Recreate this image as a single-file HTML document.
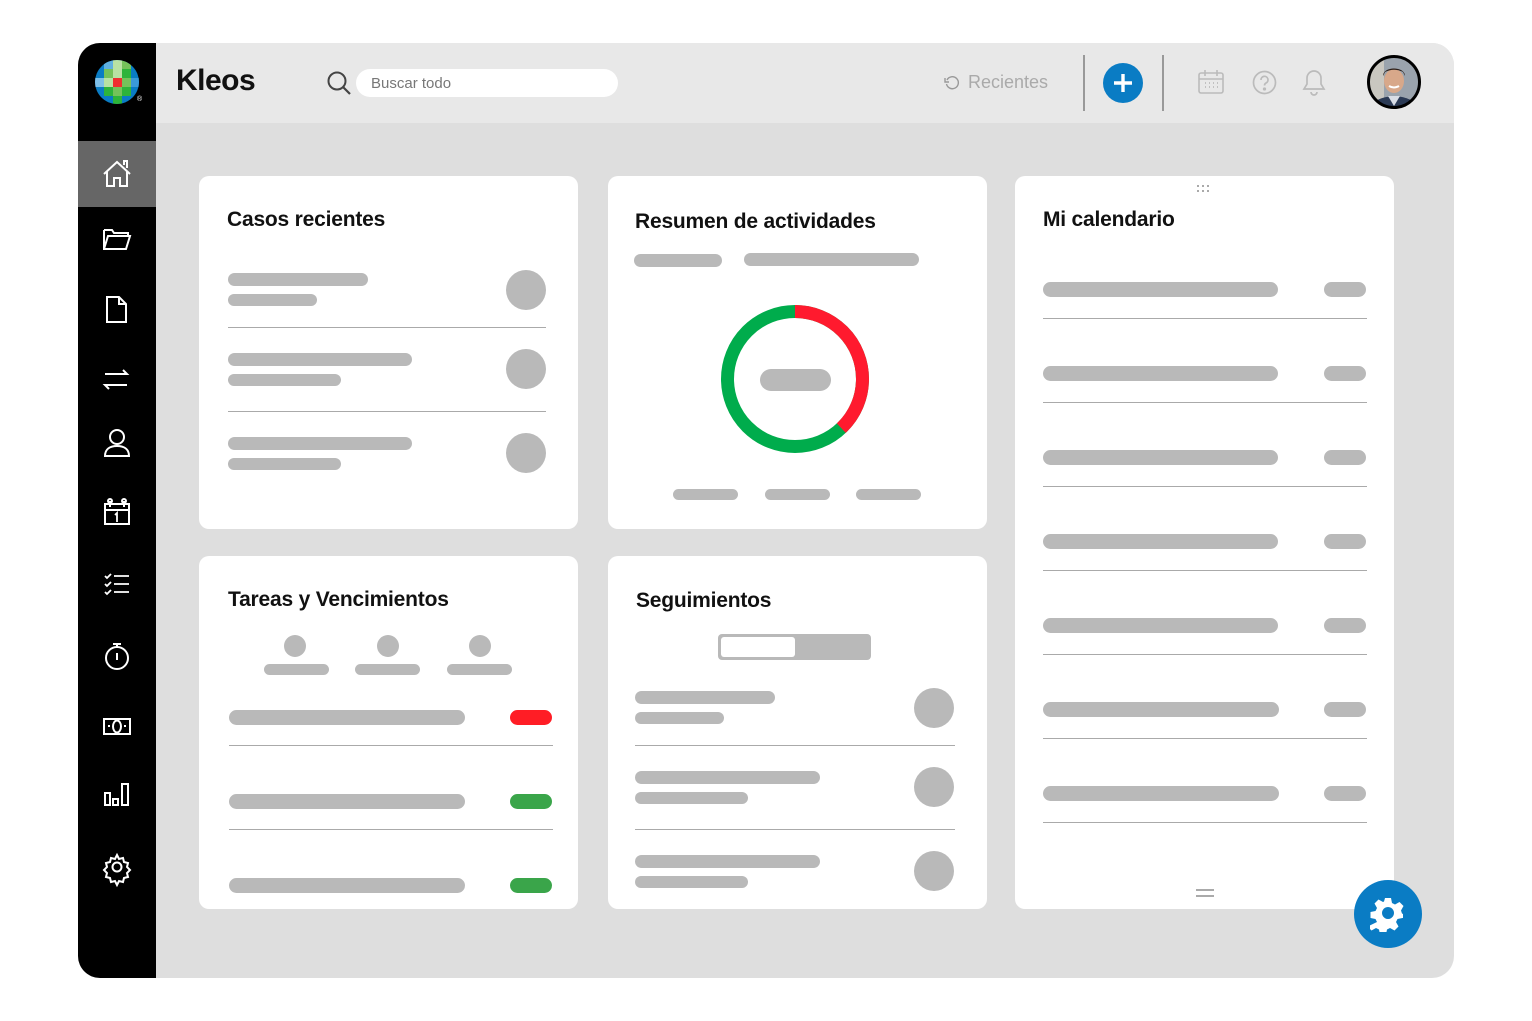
<!DOCTYPE html>
<html><head><meta charset="utf-8"><style>
*{margin:0;padding:0;box-sizing:border-box}
body{width:1532px;height:1021px;background:#fff;position:relative;overflow:hidden;font-family:"Liberation Sans",sans-serif}
.a{position:absolute}
.p{position:absolute;background:#b9b9b9;border-radius:8px}
.c{position:absolute;background:#b9b9b9;border-radius:50%}
.d{position:absolute;height:1px;background:#aaa}
.card{position:absolute;background:#fff;border-radius:10px}
.t{position:absolute;font-weight:bold;font-size:21px;color:#111;white-space:nowrap;letter-spacing:-0.2px}
.ic{position:absolute;left:100px}
</style></head><body>
<div class="a" style="left:78px;top:43px;width:1376px;height:935px;background:#dedede;border-radius:22px;overflow:hidden">
  <div class="a" style="left:78px;top:0;width:1298px;height:80px;background:#e8e8e8"></div>
  <div class="a" style="left:0;top:0;width:78px;height:935px;background:#000"></div>
  <div class="a" style="left:0;top:98px;width:78px;height:66px;background:#666"></div>
</div>
<!-- logo -->
<svg class="a" style="left:90px;top:55px" width="60" height="55" viewBox="0 0 60 55">
<defs><clipPath id="cl"><circle cx="27" cy="27" r="22"/></clipPath></defs>
<g clip-path="url(#cl)">
<rect x="0" y="0" width="60" height="55" fill="#0a7cc4"/>
<rect x="14" y="5" width="9" height="9" fill="#5fb0e0"/><rect x="23" y="5" width="9" height="9" fill="#b8e2a3"/><rect x="32" y="5" width="9" height="9" fill="#75c25a"/>
<rect x="14" y="14" width="9" height="9" fill="#75c25a"/><rect x="23" y="14" width="9" height="9" fill="#b8e2a3"/><rect x="32" y="14" width="9" height="9" fill="#2db43a"/>
<rect x="5" y="23" width="9" height="9" fill="#7fc0e8"/><rect x="14" y="23" width="9" height="9" fill="#b8e2a3"/><rect x="23" y="23" width="9" height="9" fill="#ee2f2f"/><rect x="32" y="23" width="9" height="9" fill="#75c25a"/><rect x="41" y="23" width="9" height="9" fill="#3a9ad8"/>
<rect x="14" y="32" width="9" height="9" fill="#2db43a"/><rect x="23" y="32" width="9" height="9" fill="#75c25a"/><rect x="32" y="32" width="9" height="9" fill="#2db43a"/>
<rect x="23" y="41" width="9" height="9" fill="#2db43a"/>
</g>
<text x="47" y="46" font-size="7" fill="#fff" font-family="Liberation Sans">®</text>
</svg>
<div class="a" style="left:176px;top:64px;font-size:30px;font-weight:bold;color:#111;letter-spacing:-0.5px">Kleos</div>
<svg class="a" style="left:326px;top:70px" width="26" height="26" viewBox="0 0 26 26"><circle cx="11" cy="11" r="8.5" fill="none" stroke="#444" stroke-width="2"/><path d="M17 17l7 7" stroke="#444" stroke-width="2.2"/></svg>
<div class="a" style="left:356px;top:69px;width:262px;height:28px;background:#fff;border-radius:14px;font-size:15px;color:#777;padding:6px 0 0 15px">Buscar todo</div>
<svg class="a" style="left:944px;top:75px" width="16" height="16" viewBox="0 0 16 16"><path d="M3 5A6 6 0 1 1 2.5 9" fill="none" stroke="#999" stroke-width="1.4"/><path d="M1 3v4h4" fill="none" stroke="#999" stroke-width="1.4"/></svg>
<div class="a" style="left:968px;top:72px;font-size:18px;color:#aaa">Recientes</div>
<div class="a" style="left:1083px;top:55px;width:2px;height:56px;background:#999"></div>
<div class="a" style="left:1162px;top:55px;width:2px;height:56px;background:#999"></div>
<div class="a" style="left:1103px;top:63px;width:40px;height:40px;border-radius:50%;background:#0a7cc4"></div>
<svg class="a" style="left:1103px;top:63px" width="40" height="40"><path d="M20 11v18M11 20h18" stroke="#fff" stroke-width="3.4"/></svg>
<svg class="a" style="left:1197px;top:68px" width="28" height="28" viewBox="0 0 28 28" fill="none" stroke="#bbb" stroke-width="1.6"><rect x="2" y="5" width="24" height="20" rx="2"/><path d="M2 11h24M8 2v6M20 2v6"/><path d="M8 15h1M12 15h1M16 15h1M20 15h1M8 19h1M12 19h1M16 19h1M20 19h1" stroke-width="1.8"/></svg>
<svg class="a" style="left:1252px;top:70px" width="25" height="25" viewBox="0 0 25 25" fill="none" stroke="#bbb" stroke-width="1.7"><circle cx="12.5" cy="12.5" r="11"/><path d="M9 10a3.5 3.5 0 1 1 5 3c-1.2.7-1.5 1.3-1.5 2.5"/><circle cx="12.5" cy="19" r=".8" fill="#bbb"/></svg>
<svg class="a" style="left:1301px;top:68px" width="26" height="28" viewBox="0 0 26 28" fill="none" stroke="#bbb" stroke-width="1.7"><path d="M13 3a7 7 0 0 0-7 7v6l-3 5h20l-3-5v-6a7 7 0 0 0-7-7z"/><path d="M10 24a3 3 0 0 0 6 0"/></svg>
<svg class="a" style="left:1366px;top:54px" width="56" height="56" viewBox="0 0 56 56">
<defs><clipPath id="av"><circle cx="28" cy="28" r="25"/></clipPath></defs>
<g clip-path="url(#av)"><rect width="56" height="56" fill="#9aa3ad"/><rect x="0" y="0" width="18" height="56" fill="#c9c7c0"/><path d="M4 56c2-10 12-13 24-14 12 1 22 4 24 14z" fill="#2b3a55"/><path d="M22 42l6 10 6-10z" fill="#d8dde6"/><ellipse cx="28" cy="27" rx="10" ry="12" fill="#d8a88a"/><path d="M17 22c0-10 22-10 22 0l-2-4c-6-3-12-3-18 0z" fill="#2a1e18"/><path d="M23 32q5 3 10 0" stroke="#fff" stroke-width="2" fill="none"/></g>
<circle cx="28" cy="28" r="25.5" fill="none" stroke="#000" stroke-width="3"/></svg>
<!-- sidebar icons -->
<svg class="a" style="left:78px;top:140px" width="78" height="760" viewBox="0 0 78 760" fill="none" stroke="#fff" stroke-width="2">
<path d="M26 34l13-12 13 12M29 31v15h7v-8h6v8h7v-15M46 25v-4h3v7"/>
<path d="M26 90h8l2 3h14v3M26 90v19h22l4-13H30l-4 13"/>
<path d="M29 157h12l7 7v18H29zM41 157v7h7"/>
<path d="M27 234h22l-4-4M49 245H27l4 4"/>
<circle cx="39" cy="297" r="7"/><path d="M27 316c0-7 5-10 12-10s12 3 12 10z"/>
<rect x="27" y="364" width="24" height="20"/><path d="M27 370h24M32 361v6M46 361v6"/><circle cx="32" cy="361" r="2"/><circle cx="46" cy="361" r="2"/><path d="M37 375l2-2v9" stroke-width="1.8"/>
<path d="M27 436l2 2 4-4M27 444l2 2 4-4M27 452l2 2 4-4M36 436h15M36 444h15M36 452h15" stroke-width="1.8"/>
<circle cx="39" cy="518" r="11"/><path d="M35 504h8M39 504v4M39 513v7"/>
<rect x="26" y="579" width="26" height="15"/><ellipse cx="39" cy="586.5" rx="4" ry="6"/><path d="M30 586h2M46 586h2"/>
<path d="M27 653h5v12h-5zM35 659h5v6h-5zM44 644h6v21h-6z"/>
<path d="M39 715l2 4 4-1 1 4 4 1-1 4 3 3-3 3 1 4-4 1-1 4-4-1-2 4-2-4-4 1-1-4-4-1 1-4-3-3 3-3-1-4 4-1 1-4 4 1z"/><circle cx="39" cy="727" r="4.5"/>
</svg>
<!-- card 1 -->
<div class="card" style="left:199px;top:176px;width:379px;height:353px"></div>
<div class="t" style="left:227px;top:208px">Casos recientes</div>
<div class="p" style="left:228px;top:273px;width:140px;height:13px"></div><div class="p" style="left:228px;top:294px;width:89px;height:12px"></div><div class="c" style="left:506px;top:270px;width:40px;height:40px"></div>
<div class="d" style="left:228px;top:327px;width:318px"></div>
<div class="p" style="left:228px;top:353px;width:184px;height:13px"></div><div class="p" style="left:228px;top:374px;width:113px;height:12px"></div><div class="c" style="left:506px;top:349px;width:40px;height:40px"></div>
<div class="d" style="left:228px;top:411px;width:318px"></div>
<div class="p" style="left:228px;top:437px;width:184px;height:13px"></div><div class="p" style="left:228px;top:458px;width:113px;height:12px"></div><div class="c" style="left:506px;top:433px;width:40px;height:40px"></div>
<!-- card 2 -->
<div class="card" style="left:608px;top:176px;width:379px;height:353px"></div>
<div class="t" style="left:635px;top:210px">Resumen de actividades</div>
<div class="p" style="left:634px;top:254px;width:88px;height:13px"></div><div class="p" style="left:744px;top:253px;width:175px;height:13px"></div>
<svg class="a" style="left:715px;top:299px" width="160" height="160" viewBox="0 0 160 160"><circle cx="80" cy="80" r="67.5" fill="none" stroke="#00ac4c" stroke-width="13"/><circle cx="80" cy="80" r="67.5" fill="none" stroke="#ff1a2e" stroke-width="13" stroke-dasharray="161 1000" transform="rotate(-90 80 80)"/></svg>
<div class="p" style="left:760px;top:369px;width:71px;height:22px;border-radius:11px"></div>
<div class="p" style="left:673px;top:489px;width:65px;height:11px"></div><div class="p" style="left:765px;top:489px;width:65px;height:11px"></div><div class="p" style="left:856px;top:489px;width:65px;height:11px"></div>
<!-- card 3 -->
<div class="card" style="left:1015px;top:176px;width:379px;height:733px"></div>
<div class="t" style="left:1043px;top:208px">Mi calendario</div>
<svg class="a" style="left:1197px;top:184px" width="16" height="10"><g fill="#aaa"><rect x="0" y="1" width="2" height="2"/><rect x="5" y="1" width="2" height="2"/><rect x="10" y="1" width="2" height="2"/><rect x="0" y="6" width="2" height="2"/><rect x="5" y="6" width="2" height="2"/><rect x="10" y="6" width="2" height="2"/></g></svg>
<div class="p" style="left:1043px;top:282px;width:235px;height:15px"></div><div class="p" style="left:1324px;top:282px;width:42px;height:15px"></div><div class="d" style="left:1043px;top:318px;width:324px"></div>
<div class="p" style="left:1043px;top:366px;width:235px;height:15px"></div><div class="p" style="left:1324px;top:366px;width:42px;height:15px"></div><div class="d" style="left:1043px;top:402px;width:324px"></div>
<div class="p" style="left:1043px;top:450px;width:235px;height:15px"></div><div class="p" style="left:1324px;top:450px;width:42px;height:15px"></div><div class="d" style="left:1043px;top:486px;width:324px"></div>
<div class="p" style="left:1043px;top:534px;width:235px;height:15px"></div><div class="p" style="left:1324px;top:534px;width:42px;height:15px"></div><div class="d" style="left:1043px;top:570px;width:324px"></div>
<div class="p" style="left:1043px;top:618px;width:235px;height:15px"></div><div class="p" style="left:1324px;top:618px;width:42px;height:15px"></div><div class="d" style="left:1043px;top:654px;width:324px"></div>
<div class="p" style="left:1043px;top:702px;width:236px;height:15px"></div><div class="p" style="left:1324px;top:702px;width:42px;height:15px"></div><div class="d" style="left:1043px;top:738px;width:324px"></div>
<div class="p" style="left:1043px;top:786px;width:236px;height:15px"></div><div class="p" style="left:1324px;top:786px;width:42px;height:15px"></div><div class="d" style="left:1043px;top:822px;width:324px"></div>
<div class="a" style="left:1196px;top:889px;width:18px;height:2px;background:#aaa"></div><div class="a" style="left:1196px;top:895px;width:18px;height:2px;background:#aaa"></div>
<!-- card 4 -->
<div class="card" style="left:199px;top:556px;width:379px;height:353px"></div>
<div class="t" style="left:228px;top:588px">Tareas y Vencimientos</div>
<div class="c" style="left:284px;top:635px;width:22px;height:22px"></div><div class="c" style="left:377px;top:635px;width:22px;height:22px"></div><div class="c" style="left:469px;top:635px;width:22px;height:22px"></div>
<div class="p" style="left:264px;top:664px;width:65px;height:11px"></div><div class="p" style="left:355px;top:664px;width:65px;height:11px"></div><div class="p" style="left:447px;top:664px;width:65px;height:11px"></div>
<div class="p" style="left:229px;top:710px;width:236px;height:15px"></div><div class="p" style="left:510px;top:710px;width:42px;height:15px;background:#ff1d25"></div><div class="d" style="left:229px;top:745px;width:324px"></div>
<div class="p" style="left:229px;top:794px;width:236px;height:15px"></div><div class="p" style="left:510px;top:794px;width:42px;height:15px;background:#3aa54a"></div><div class="d" style="left:229px;top:829px;width:324px"></div>
<div class="p" style="left:229px;top:878px;width:236px;height:15px"></div><div class="p" style="left:510px;top:878px;width:42px;height:15px;background:#3aa54a"></div>
<!-- card 5 -->
<div class="card" style="left:608px;top:556px;width:379px;height:353px"></div>
<div class="t" style="left:636px;top:589px">Seguimientos</div>
<div class="a" style="left:718px;top:634px;width:153px;height:26px;background:#b9b9b9;border-radius:4px"></div><div class="a" style="left:721px;top:637px;width:74px;height:20px;background:#fff;border-radius:3px"></div>
<div class="p" style="left:635px;top:691px;width:140px;height:13px"></div><div class="p" style="left:635px;top:712px;width:89px;height:12px"></div><div class="c" style="left:914px;top:688px;width:40px;height:40px"></div><div class="d" style="left:635px;top:745px;width:320px"></div>
<div class="p" style="left:635px;top:771px;width:185px;height:13px"></div><div class="p" style="left:635px;top:792px;width:113px;height:12px"></div><div class="c" style="left:914px;top:767px;width:40px;height:40px"></div><div class="d" style="left:635px;top:829px;width:320px"></div>
<div class="p" style="left:635px;top:855px;width:185px;height:13px"></div><div class="p" style="left:635px;top:876px;width:113px;height:12px"></div><div class="c" style="left:914px;top:851px;width:40px;height:40px"></div>
<!-- FAB -->
<div class="a" style="left:1354px;top:880px;width:68px;height:68px;border-radius:50%;background:#0a7cc4"></div>
<svg class="a" style="left:1370px;top:896px" width="36" height="36" viewBox="0 0 36 36"><path fill="#fff" fill-rule="evenodd" d="M15 3h6l1 5 3 1.5 4.5-2.5 4 4-2.5 4.5L32 18.5l1 .5v0-2 6h-.5l-5 1-1.5 3 2.5 4.5-4 4-4.5-2.5-3 1.5-1 5h-6l-1-5-3-1.5-4.5 2.5-4-4L7 27 5.5 24 .5 23v-6l5-1L7 13 4.5 8.5l4-4L13 7l1-.5z M18 12a6 6 0 1 0 .01 0z" transform="translate(0,-1) scale(1)"/></svg>
</body></html>
